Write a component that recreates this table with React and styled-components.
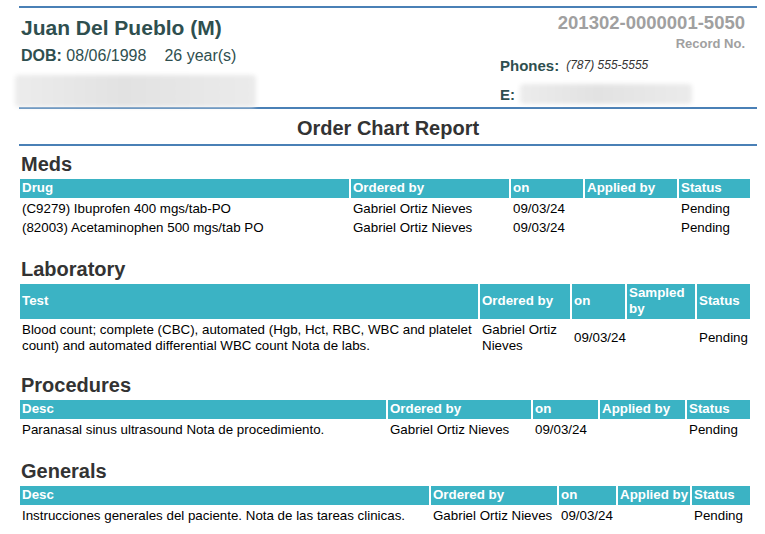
import React from 'react';
import styled, { createGlobalStyle } from 'styled-components';

const GlobalStyle = createGlobalStyle`
  body {
    margin: 0;
    background: #fff;
    font-family: "Liberation Sans", Arial, sans-serif;
  }
`;

const Page = styled.div`
  width: 738px;
  padding: 6px 0 0 19px;
`;

const Rule = styled.div`
  height: 2px;
  background: #4a80b6;
`;

const Header = styled.div`
  display: flex;
  justify-content: space-between;
  height: 99px;
`;

const Patient = styled.div`
  display: flex;
  flex-direction: column;
  padding: 8px 0 0 2px;
`;

const Name = styled.h1`
  margin: 0;
  font-size: 21px;
  line-height: 24px;
  font-weight: bold;
  color: #2f4f4f;
`;

const Dob = styled.div`
  margin-top: 7px;
  font-size: 16px;
  line-height: 18px;
  color: #2f4f4f;

  b {
    font-weight: bold;
  }
  span {
    margin-left: 18px;
  }
`;

const Blur = styled.div`
  width: ${(p) => p.w}px;
  height: ${(p) => p.h}px;
  margin-left: ${(p) => p.ml || 0}px;
  border-radius: 4px;
  background: linear-gradient(90deg, #ececec 0%, #e2e2e2 45%, #ebebeb 100%);
  filter: blur(2px);
`;

const Contact = styled.div`
  width: 257px;
  display: flex;
  flex-direction: column;
`;

const RecordNo = styled.div`
  padding-right: 12px;
  text-align: right;
  color: #a0a0a0;
  font-weight: bold;
  font-size: 18.5px;
  line-height: 21px;
  margin-top: 4px;
`;

const RecordLabel = styled.div`
  padding-right: 12px;
  text-align: right;
  color: #a0a0a0;
  font-weight: bold;
  font-size: 13px;
  line-height: 15px;
  margin-top: 3px;
`;

const Field = styled.div`
  display: flex;
  align-items: center;
  margin-top: ${(p) => p.mt}px;
  font-size: 15px;
  line-height: 17px;
  color: #2f4f4f;
  font-weight: bold;
`;

const Phone = styled.span`
  margin-left: 7px;
  font-size: 12px;
  font-style: italic;
  font-weight: normal;
  color: #333;
`;

const Title = styled.h2`
  margin: 0;
  height: 35px;
  padding-top: 8px;
  box-sizing: border-box;
  line-height: 23px;
  text-align: center;
  font-size: 20px;
  font-weight: bold;
  color: #333;
`;

const SectionTitle = styled.h3`
  margin: ${(p) => p.mt}px 0 1px 2px;
  font-size: 20px;
  line-height: 23px;
  font-weight: bold;
  color: #333;
`;

const Table = styled.table`
  width: 734px;
  margin-left: -1px;
  border-spacing: 2px;
  table-layout: fixed;
  font-size: 13.33px;
  line-height: 16px;
`;

const Th = styled.th`
  background: #3bb3c4;
  color: #fff;
  font-weight: bold;
  text-align: left;
  padding: 1px 1px 2px 2px;
  vertical-align: middle;
`;

const Td = styled.td`
  color: #000;
  padding: 1px 2px 0;
  vertical-align: middle;
`;

const sections = [
  {
    title: 'Meds',
    mt: 7,
    cols: [
      ['Drug', 329],
      ['Ordered by', 158],
      ['on', 72],
      ['Applied by', 92],
      ['Status', 71],
    ],
    rows: [
      ['(C9279) Ibuprofen 400 mgs/tab-PO', 'Gabriel Ortiz Nieves', '09/03/24', '', 'Pending'],
      ['(82003) Acetaminophen 500 mgs/tab PO', 'Gabriel Ortiz Nieves', '09/03/24', '', 'Pending'],
    ],
  },
  {
    title: 'Laboratory',
    mt: 20,
    cols: [
      ['Test', 458],
      ['Ordered by', 90],
      ['on', 53],
      ['Sampled by', 68],
      ['Status', 53],
    ],
    rows: [
      [
        'Blood count; complete (CBC), automated (Hgb, Hct, RBC, WBC and platelet count) and automated differential WBC count Nota de labs.',
        'Gabriel Ortiz Nieves',
        '09/03/24',
        '',
        'Pending',
      ],
    ],
  },
  {
    title: 'Procedures',
    mt: 18,
    cols: [
      ['Desc', 366],
      ['Ordered by', 143],
      ['on', 65],
      ['Applied by', 85],
      ['Status', 63],
    ],
    rows: [
      ['Paranasal sinus ultrasound Nota de procedimiento.', 'Gabriel Ortiz Nieves', '09/03/24', '', 'Pending'],
    ],
  },
  {
    title: 'Generals',
    mt: 20,
    cols: [
      ['Desc', 409],
      ['Ordered by', 126],
      ['on', 57],
      ['Applied by', 72],
      ['Status', 58],
    ],
    rows: [
      [
        'Instrucciones generales del paciente. Nota de las tareas clinicas.',
        'Gabriel Ortiz Nieves',
        '09/03/24',
        '',
        'Pending',
      ],
    ],
  },
];

const App = () => {
  return (
    <Page>
      <GlobalStyle />
      <Rule />
      <Header>
        <Patient>
          <Name>Juan Del Pueblo (M)</Name>
          <Dob>
            <b>DOB:</b> 08/06/1998<span>26 year(s)</span>
          </Dob>
          <Blur w={241} h={33} ml={-6} style={{ marginTop: 10 }} />
        </Patient>
        <Contact>
          <RecordNo>201302-0000001-5050</RecordNo>
          <RecordLabel>Record No.</RecordLabel>
          <Field mt={6}>
            Phones:<Phone>(787) 555-5555</Phone>
          </Field>
          <Field mt={10}>
            E:<Blur w={172} h={20} ml={5} />
          </Field>
        </Contact>
      </Header>
      <Rule />
      <Title>Order Chart Report</Title>
      <Rule />
      {sections.map((section) => (
        <div key={section.title}>
          <SectionTitle mt={section.mt}>{section.title}</SectionTitle>
          <Table>
            <colgroup>
              {section.cols.map(([label, w]) => (
                <col key={label} style={{ width: w }} />
              ))}
            </colgroup>
            <thead>
              <tr>
                {section.cols.map(([label]) => (
                  <Th key={label}>{label}</Th>
                ))}
              </tr>
            </thead>
            <tbody>
              {section.rows.map((row, r) => (
                <tr key={r}>
                  {row.map((cell, c) => (
                    <Td key={c}>{cell}</Td>
                  ))}
                </tr>
              ))}
            </tbody>
          </Table>
        </div>
      ))}
    </Page>
  );
};

export default App;
